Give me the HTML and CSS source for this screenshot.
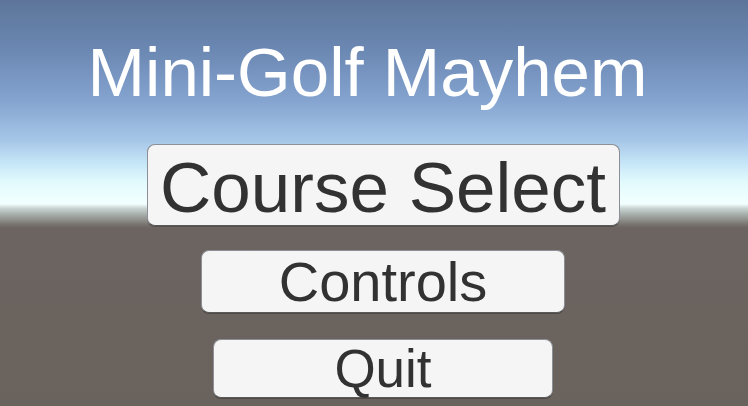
FILE: index.html
```html
<!DOCTYPE html>
<html lang="en">
<head>
  <meta charset="UTF-8" />
  <meta name="viewport" content="width=device-width, initial-scale=1.0"/>
  <title>Mini-Golf Mayhem</title>
  <link rel="stylesheet" href="styles.css">
</head>
<body>
  <div class="menu">
    <h1 class="title">Mini-Golf Mayhem</h1>
    <button class="btn btn-course">Course Select</button>
    <button class="btn btn-controls">Controls</button>
    <button class="btn btn-quit">Quit</button>
  </div>
</body>
</html>
```

FILE: styles.css
```css
* {
  margin: 0;
  padding: 0;
  box-sizing: border-box;
}
html, body {
  width: 100%;
  height: 100%;
  overflow: hidden;
}
body {
  font-family: "Liberation Sans", Arial, sans-serif;
  /* cielo + orizzonte + terreno */
  background: linear-gradient(to bottom,
    #5d7599 0px,
    #6b88b3 50px,
    #84a3cf 100px,
    #a6c6e8 140px,
    #c8e8f8 165px,
    #e2fafd 182px,
    #f3ffff 204px,
    #cbd7d5 208px,
    #a9b1ae 214px,
    #8e8f8a 220px,
    #76716c 225px,
    #6b6460 228px,
    #6a625d 406px);
}

.menu {
  display: flex;
  flex-direction: column;
  align-items: center;
  padding-left: 18px;
}
.title {
  font-weight: normal;
  font-size: 69px;
  line-height: 70px;
  color: #ffffff;
  margin-top: 38px;
  margin-right: 31px;
}

.btn {
  display: flex;
  align-items: center;
  justify-content: center;
  font-family: inherit;
  line-height: 1;
  color: #323232;
  background: #f5f5f5;
  border: 1px solid #8c8f95;
  border-bottom-color: #5a5a5a;
  border-radius: 8px;
  box-shadow: 0 1px 0 rgba(0, 0, 0, 0.25);
}
.btn-course {
  width: 473px;
  height: 82px;
  margin-top: 36px;
  font-size: 71px;
  padding-top: 5px;
}
.btn-controls {
  width: 364px;
  height: 63px;
  margin-top: 24px;
  font-size: 56px;
}
.btn-quit {
  width: 340px;
  height: 59px;
  margin-top: 26px;
  font-size: 53px;
}
```
